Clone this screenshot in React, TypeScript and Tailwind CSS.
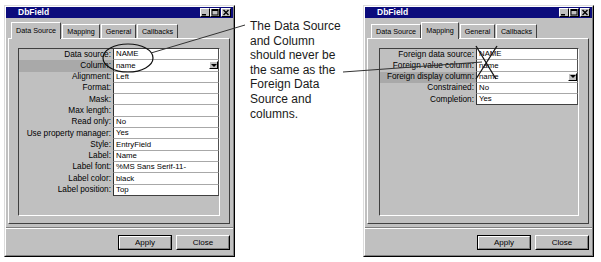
const ui = "font-['Liberation_Sans',Arial,sans-serif]";

type Row = { label: string; value: string; hi?: boolean; drop?: boolean };

const leftRows: Row[] = [
  { label: "Data source:", value: "NAME" },
  { label: "Column:", value: "name", hi: true, drop: true },
  { label: "Alignment:", value: "Left" },
  { label: "Format:", value: "" },
  { label: "Mask:", value: "" },
  { label: "Max length:", value: "" },
  { label: "Read only:", value: "No" },
  { label: "Use property manager:", value: "Yes" },
  { label: "Style:", value: "EntryField" },
  { label: "Label:", value: "Name" },
  { label: "Label font:", value: "%MS Sans Serif-11-" },
  { label: "Label color:", value: "black" },
  { label: "Label position:", value: "Top" },
];

const rightRows: Row[] = [
  { label: "Foreign data source:", value: "NAME" },
  { label: "Foreign value column:", value: "name" },
  { label: "Foreign display column:", value: "name", hi: true, drop: true },
  { label: "Constrained:", value: "No" },
  { label: "Completion:", value: "Yes" },
];

const tabs: [string, string][] = [
  ["Data Source", "w-[50px]"],
  ["Mapping", "w-[38px]"],
  ["General", "w-[35px]"],
  ["Callbacks", "w-[41px]"],
];

function TitleBtn({ kind }: { kind: "min" | "max" | "close" }) {
  return (
    <div className="w-[10px] h-[9px] bg-[#c0c0c0] border border-t-white border-l-white border-r-black border-b-black flex items-center justify-center">
      <svg width="8" height="7" viewBox="0 0 8 7">
        {kind === "min" && <rect x="1" y="5" width="4" height="1.5" fill="#000" />}
        {kind === "max" && (
          <>
            <rect x="1" y="0.5" width="6" height="5.5" fill="none" stroke="#000" strokeWidth="1" />
            <rect x="1" y="0.5" width="6" height="1.5" fill="#000" />
          </>
        )}
        {kind === "close" && (
          <path d="M1.5 1 L6.5 6 M6.5 1 L1.5 6" stroke="#000" strokeWidth="1.4" />
        )}
      </svg>
    </div>
  );
}

function DbDialog({ active, rows, labelW, boxMl }: { active: number; rows: Row[]; labelW: string; boxMl: string }) {
  return (
    <div className={`${ui} w-[231px] h-[252px] shrink-0 bg-[#c0c0c0] border border-t-[#dcdcdc] border-l-[#dcdcdc] border-r-black border-b-black`}>
      <div className="h-full flex flex-col border border-t-white border-l-white border-r-[#808080] border-b-[#808080]">
        {/* title bar */}
        <div className="h-[11px] bg-[#0b0b7c] flex items-center pl-[12px] pr-[2px]">
          <span className="text-white font-bold text-[8.5px] leading-none">DbField</span>
          <div className="ml-auto flex items-center">
            <TitleBtn kind="min" />
            <TitleBtn kind="max" />
            <div className="ml-[1px]">
              <TitleBtn kind="close" />
            </div>
          </div>
        </div>

        {/* tabs */}
        <div className="mt-[4px] ml-[2px] mr-[3px] h-[16px] flex items-end pl-[3px] relative z-10">
          {tabs.map(([name, w], i) =>
            i === active ? (
              <div
                key={name}
                className={`${w} h-[17px] -mb-[1px] bg-[#c0c0c0] border-t border-l border-r border-t-white border-l-white border-r-[#404040] flex items-center justify-center text-[7.2px] leading-none text-black`}
              >
                {name}
              </div>
            ) : (
              <div
                key={name}
                className={`${w} h-[14px] ml-[1px] border-t border-l border-r border-t-white border-l-white border-r-[#404040] flex items-center justify-center text-[7.2px] leading-none text-black`}
              >
                {name}
              </div>
            )
          )}
        </div>

        {/* tab page */}
        <div className="ml-[2px] mr-[3px] h-[186px] border border-t-white border-l-white border-r-[#404040] border-b-[#404040]">
          <div className={`${boxMl} mr-[9px] mt-[9px] h-[168px] border border-t-[#404040] border-l-[#404040] border-r-white border-b-white`}>
            <div className="flex flex-col">
              {rows.map((r, i) => (
                <div key={r.label} className="flex h-[11.3px]">
                  <div
                    className={`${labelW} shrink-0 flex items-center justify-end pr-[2px] text-[8.25px] leading-none text-black whitespace-nowrap ${
                      r.hi ? "bg-[#a9a9a9]" : ""
                    }`}
                  >
                    {r.label}
                  </div>
                  <div
                    className={`relative flex-1 bg-white border-l border-r border-b border-l-[#303030] border-r-[#505050] flex items-center pl-[2px] text-[7.8px] leading-none text-black ${
                      i === rows.length - 1 ? "border-b-[#404040]" : "border-b-[#a8a8a8]"
                    }`}
                  >
                    {r.value}
                    {r.drop && (
                      <div className="absolute right-0 top-[1px] w-[9px] h-[8px] bg-[#c0c0c0] border border-t-white border-l-white border-r-black border-b-black flex items-center justify-center">
                        <div className="w-0 h-0 border-l-[3px] border-r-[3px] border-t-[3px] border-l-transparent border-r-transparent border-t-black" />
                      </div>
                    )}
                  </div>
                </div>
              ))}
            </div>
          </div>
        </div>

        {/* separator */}
        <div className="mt-[3px] h-[2px] border-t border-b border-t-[#808080] border-b-white" />

        {/* buttons */}
        <div className="mt-[6px] flex justify-end gap-[4px] pr-[3px]">
          <div className="w-[54px] h-[15px] border border-black">
            <div className="h-full border border-t-white border-l-white border-r-[#808080] border-b-[#808080] flex items-center justify-center text-[8px] leading-none text-black">
              Apply
            </div>
          </div>
          <div className="w-[54px] h-[15px] border border-t-white border-l-white border-r-black border-b-black">
            <div className="h-full border border-t-[#c0c0c0] border-l-[#c0c0c0] border-r-[#808080] border-b-[#808080] flex items-center justify-center text-[8px] leading-none text-black">
              Close
            </div>
          </div>
        </div>
      </div>
    </div>
  );
}

export default function App() {
  return (
    <div className="relative w-[601px] h-[262px] overflow-hidden bg-white">
      <div className="flex items-start pl-[4px] pt-[5px]">
        <DbDialog active={0} rows={leftRows} labelW="w-[94px]" boxMl="ml-[9px]" />

        <div className={`${ui} ml-[15px] mt-[14px] w-[113px] text-[12px] leading-[14.6px] text-[#1a1a1a]`}>
          The Data Source
          <br />
          and Column
          <br />
          should never be
          <br />
          the same as the
          <br />
          Foreign Data
          <br />
          Source and
          <br />
          columns.
        </div>

        <DbDialog active={1} rows={rightRows} labelW="w-[96px]" boxMl="ml-[11px]" />
      </div>

      {/* annotations drawn over the dialogs */}
      <svg className="absolute left-0 top-0 pointer-events-none" width="601" height="262" viewBox="0 0 601 262">
        <ellipse cx="128" cy="58" rx="25" ry="14" fill="none" stroke="#111" strokeWidth="1.2" />
        <line x1="151" y1="53" x2="245" y2="25" stroke="#333" strokeWidth="1" />
        <line x1="343" y1="72" x2="482" y2="62" stroke="#333" strokeWidth="1" />
        <line x1="476" y1="46" x2="496" y2="79" stroke="#111" strokeWidth="1.3" />
        <line x1="497" y1="46" x2="476" y2="79" stroke="#111" strokeWidth="1.3" />
      </svg>
    </div>
  );
}
